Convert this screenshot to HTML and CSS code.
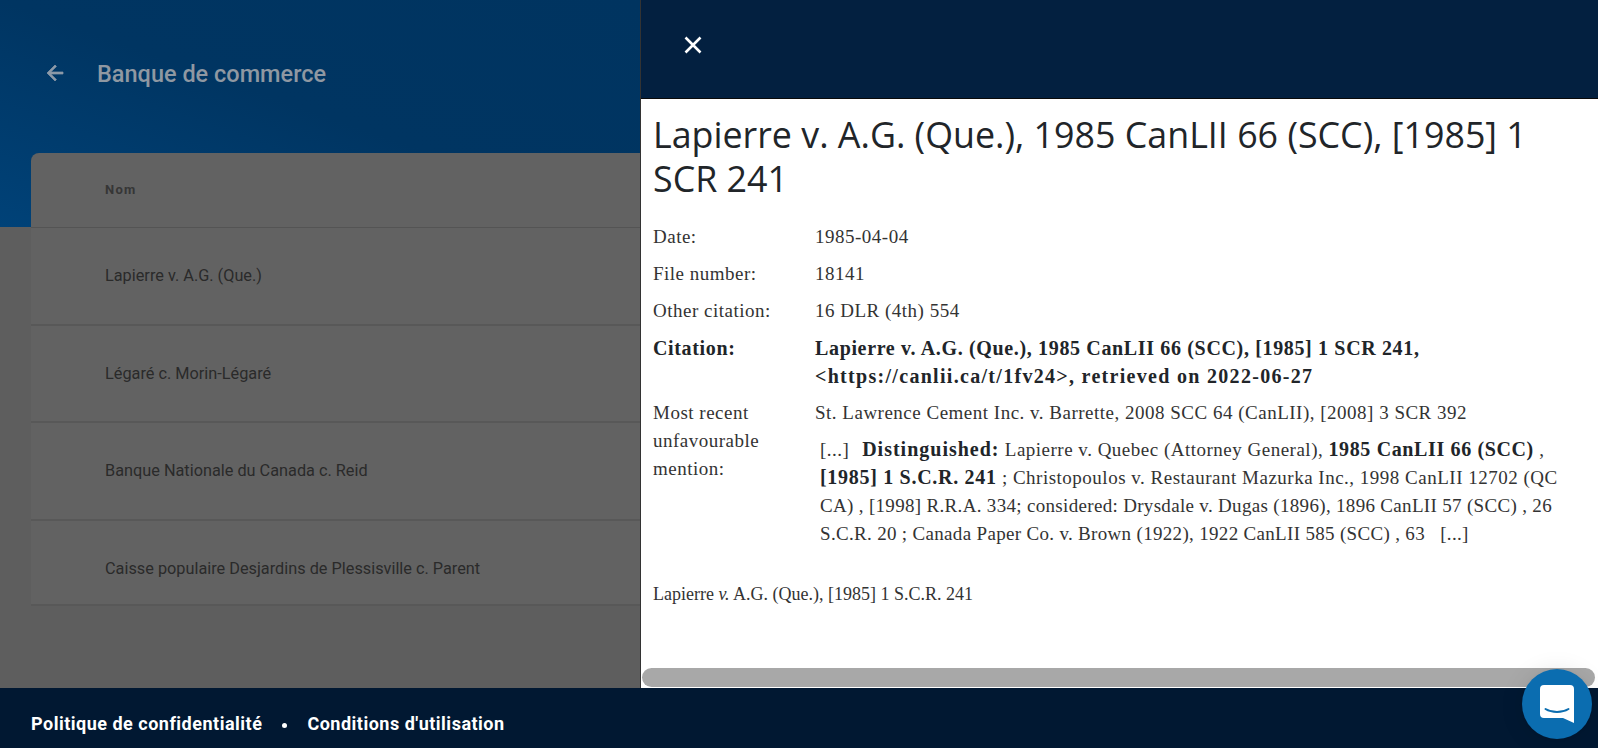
FILE: index.html
```html
<!DOCTYPE html>
<html lang="fr">
<head>
<meta charset="utf-8">
<title>Banque de commerce</title>
<link rel="stylesheet" href="styles.css">
</head>
<body>
<div class="app">
  <main class="page">
    <header class="hero">
      <svg class="back" viewBox="0 0 24 24" width="24" height="24"><path d="M20 11H7.830l5.590-5.590L12 4l-8 8 8 8 1.410-1.410L7.830 13H20z"/></svg>
      <h1 class="hero-title">Banque de commerce</h1>
    </header>
    <section class="card">
      <div class="thead">Nom</div>
      <div class="row r1">Lapierre v. A.G. (Que.)</div>
      <div class="row r1">Légaré c. Morin-Légaré</div>
      <div class="row r1">Banque Nationale du Canada c. Reid</div>
      <div class="row r2">Caisse populaire Desjardins de Plessisville c. Parent</div>
    </section>
  </main>
  <aside class="drawer">
    <div class="drawer-top">
      <svg class="close" viewBox="0 0 20 20" width="20" height="20"><path d="M2.500 2.500 17.500 17.500M17.500 2.500 2.500 17.500"/></svg>
    </div>
    <div class="doc">
      <h2 class="doc-title">Lapierre v. A.G. (Que.), 1985 CanLII 66 (SCC), [1985] 1 SCR 241</h2>
      <dl class="meta">
        <dt>Date:</dt><dd>1985-04-04</dd>
        <dt>File number:</dt><dd>18141</dd>
        <dt>Other citation:</dt><dd>16 DLR (4th) 554</dd>
        <dt class="b">Citation:</dt>
        <dd class="b">Lapierre v. A.G. (Que.), 1985 CanLII 66 (SCC), [1985] 1 SCR 241,<br><span class="b-wide">&lt;https://canlii.ca/t/1fv24&gt;, retrieved on 2022-06-27</span></dd>
        <dt>Most recent unfavourable mention:</dt>
        <dd>St. Lawrence Cement Inc. v. Barrette, 2008 SCC 64 (CanLII), [2008] 3 SCR 392
          <p class="quote">[...] &nbsp; <b class="qb qd">Distinguished:</b> Lapierre v. Quebec (Attorney General), <b class="qb qw">1985 CanLII 66 (SCC)</b> ,<br><b class="qb qn">[1985] 1 S.C.R. 241</b> ; Christopoulos v. Restaurant Mazurka Inc., 1998 CanLII 12702 (QC<br><span class="tight">CA) , [1998] R.R.A. 334; considered: Drysdale v. Dugas (1896), 1896 CanLII 57 (SCC) , 26</span><br><span class="tight">S.C.R. 20 ; Canada Paper Co. v. Brown (1922), 1922 CanLII 585 (SCC) , 63 &nbsp; [...]</span></p>
        </dd>
      </dl>
      <p class="short">Lapierre <i>v.</i> A.G. (Que.), [1985] 1 S.C.R. 241</p>
    </div>
    <div class="hscroll"><div class="thumb"></div></div>
  </aside>
</div>
<footer class="footer">
  <a class="flink">Politique de confidentialité</a>
  <span class="dot"></span>
  <a class="flink">Conditions d'utilisation</a>
</footer>
<button class="chat" aria-label="Chat">
  <svg viewBox="0 0 34 38" width="34" height="38"><path class="bubble" d="M4 0h26a4 4 0 0 1 4 4v34l-11-5H4a4 4 0 0 1-4-4V4a4 4 0 0 1 4-4z"/><path class="smile" d="M5.500 24c6.500 4 16.500 4 23 0"/></svg>
</button>
</body>
</html>
```
FILE: styles.css
```css
* { box-sizing: border-box; }
html, body { margin: 0; height: 100%; overflow: hidden; }
body { display: flex; flex-direction: column; height: 748px; background: #011832; }
.app { display: flex; height: 688px; flex: none; }
.page { position: relative; width: 640px; flex: none; background: #5e5e5e; overflow: hidden; font-family: Roboto, sans-serif; }
.hero { height: 227px; background: linear-gradient(to bottom left, #003460 0%, #003562 50%, #004278 100%); display: flex; align-items: flex-start; padding: 61px 0 0 43px; gap: 30px; }
.back { fill: #8d9aa8; stroke: #8d9aa8; stroke-width: .7; }
.hero-title { margin: 0; font-size: 23.500px; line-height: 26px; font-weight: 500; color: #8f98a2; }
.card { position: absolute; left: 31px; top: 153px; width: 640px; background: #626262; border-radius: 8px 0 0 0; }
.thead { height: 75px; padding: 30px 0 0 74px; font-size: 13px; font-weight: 700; letter-spacing: 1.300px; color: #363636; line-height: 14px; border-bottom: 1px solid #545454; }
.row { padding-left: 74px; font-size: 16.300px; color: #2a2a2a; border-bottom: 2px solid #585858; display: flex; align-items: center; }
.r1 { height: 97.500px; }
.r2 { height: 85px; padding-top: 12px; }
.drawer { width: 958px; flex: none; display: flex; flex-direction: column; background: #fff; overflow: hidden; border-left: 1px solid #333; }
.drawer-top { height: 99px; flex: none; background: #032040; padding: 35px 0 0 42px; border-bottom: 1px solid #0a0a0a; }
.close { display: block; fill: none; stroke: #fff; stroke-width: 2.600; }
.doc { flex: 1; padding: 13px 12px 0; color: #333; font-family: "Liberation Serif", serif; font-size: 19px; letter-spacing: .5px; }
.doc-title { margin: 0 0 23px; font-family: "Open Sans", "Noto Sans", sans-serif; font-size: 35.800px; line-height: 44px; font-weight: 500; letter-spacing: 0; color: #212529; }
.meta { display: grid; grid-template-columns: 162px 1fr; margin: 0; line-height: 28px; }
.meta dt { padding: 0 20px 9px 0; }
.meta dd { margin: 0; padding-bottom: 9px; }
.b { font-weight: 700; font-size: 20px; color: #212529; letter-spacing: .650px; }
.b-wide { letter-spacing: 1.300px; }
.qb { font-size: 20px; line-height: 1; color: #212529; letter-spacing: 1.200px; }
.qd { margin-left: -3px; letter-spacing: 1px; }
.qw { letter-spacing: .630px; }
.qn { letter-spacing: .700px; }
.tight { letter-spacing: .320px; }
.quote { margin: 9px 0 0 5px; color: #333; white-space: nowrap; }
.short { margin: 26px 0 0; font-size: 18px; line-height: 22px; letter-spacing: 0; color: #333; }
.hscroll { height: 20px; flex: none; padding: 0 3px 1px 1px; }
.thumb { height: 19px; background: #a8a8a8; border-radius: 10px; }
.footer { height: 60px; flex: none; display: flex; align-items: center; padding: 11px 0 0 31px; font-family: Roboto, sans-serif; font-size: 18px; font-weight: 700; color: #fff; }
.flink { color: #fff; letter-spacing: .5px; }
.dot { width: 5px; height: 5px; border-radius: 50%; background: #fff; margin: 4px 20px 0 20px; }
.chat { position: fixed; left: 1522px; top: 669px; width: 70px; height: 70px; border: 0; padding: 0; border-radius: 50%; background: #0b6db0; display: flex; align-items: center; justify-content: center; box-shadow: 0 1px 6px rgba(0,0,0,.06), 0 2px 24px rgba(0,0,0,.1); }
.bubble { fill: #fff; }
.smile { fill: none; stroke: #0b6db0; stroke-width: 2; stroke-linecap: round; }
```
